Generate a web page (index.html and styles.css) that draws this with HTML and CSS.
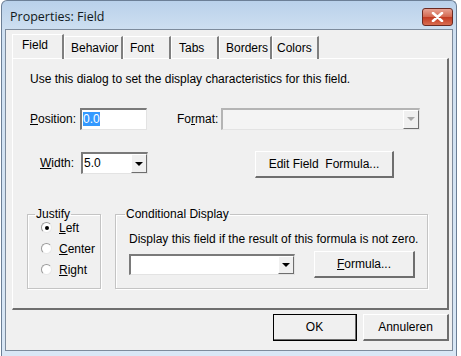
FILE: index.html
```html
<!DOCTYPE html>
<html lang="en">
<head>
  <meta charset="UTF-8">
  <title>Properties: Field</title>
  <link rel="stylesheet" href="styles.css">
</head>
<body>

<div class="window">
  <div class="titlebar">
    <span class="title">Properties: Field</span>
    <span class="close-btn">
      <svg width="13" height="10" viewBox="0 0 13 10">
        <path d="M2 1 L11 9 M11 1 L2 9" stroke="#fff" stroke-width="2.6" stroke-linecap="round"/>
      </svg>
    </span>
  </div>

  <div class="client">
    <!-- Tab strip -->
    <div class="tabs">
      <div class="tab selected">Field</div>
      <div class="tab">Behavior</div>
      <div class="tab">Font</div>
      <div class="tab">Tabs</div>
      <div class="tab">Borders</div>
      <div class="tab">Colors</div>
    </div>

    <div class="panel">
      <p class="intro">Use this dialog to set the display characteristics for this field.</p>

      <div class="row row-one">
        <label class="lbl lbl-position"><u>P</u>osition:</label>
        <div class="edit position-edit"><span class="sel-text">0.0</span></div>
        <label class="lbl lbl-format">Fo<u>r</u>mat:</label>
        <div class="combo format-combo disabled">
          <div class="combo-value"></div>
          <div class="combo-arrow"><span class="tri"></span></div>
        </div>
      </div>

      <div class="row row-two">
        <label class="lbl lbl-width"><u>W</u>idth:</label>
        <div class="combo width-combo">
          <div class="combo-value">5.0</div>
          <div class="combo-arrow"><span class="tri"></span></div>
        </div>
        <button class="btn edit-formula">Edit Field&nbsp; Formula...</button>
      </div>

      <div class="row row-groups">
        <fieldset class="group justify">
          <legend>Justify</legend>
          <div class="radios">
            <div class="radio"><span class="dot checked"></span><u>L</u>eft</div>
            <div class="radio"><span class="dot"></span><u>C</u>enter</div>
            <div class="radio"><span class="dot"></span><u>R</u>ight</div>
          </div>
        </fieldset>

        <fieldset class="group conditional">
          <legend>Conditional Display</legend>
          <div class="cond-text">Display this field if the result of this formula is not zero.</div>
          <div class="cond-row">
            <div class="combo cond-combo">
              <div class="combo-value"></div>
              <div class="combo-arrow"><span class="tri"></span></div>
            </div>
            <button class="btn formula-btn"><u>F</u>ormula...</button>
          </div>
        </fieldset>
      </div>
    </div>

    <div class="footer">
      <button class="btn dlg-btn default">OK</button>
      <button class="btn dlg-btn">Annuleren</button>
    </div>
  </div>
</div>

</body>
</html>
```

FILE: styles.css
```css
/* Dialog basis */
body {
  margin: 0;
  background: #ffffff;
  font-family: "Liberation Sans", Arial, sans-serif;
  font-size: 12px;
  color: #000;
}

.window {
  width: 456px;
  height: 356px;
  margin: 0 0 0 1px;
  background: linear-gradient(#b9d1ea, #cfe0f1 30px, #d9e7f5);
  border: 1px solid #6c7f96;
  border-bottom: none;
  border-radius: 6px 6px 0 0;
  box-sizing: border-box;
  display: flex;
  flex-direction: column;
}

.titlebar {
  height: 28px;
  display: flex;
  align-items: center;
  justify-content: space-between;
  padding: 0 3px 0 8px;
}

.title {
  font-family: "Open Sans", "Noto Sans", sans-serif;
  font-size: 12.5px;
  color: #101820;
  margin-top: 2px;
}

.close-btn {
  width: 31px;
  height: 18px;
  margin-top: 4px;
  border: 1px solid #6b2a22;
  border-radius: 3px;
  background: linear-gradient(#e8a293, #d3674f 50%, #c23a22 51%, #d86d50);
  display: flex;
  align-items: center;
  justify-content: center;
  box-sizing: border-box;
}

.client {
  flex: 1;
  margin: 0 3px 5px 3px;
  background: #f0f0f0;
  border: 1px solid #7d8b9c;
  padding: 6px 3px 0 6px;
}

/* Tabs */
.tabs {
  display: flex;
  height: 22px;
}

.tab {
  padding: 4px 0 0 6px;
  height: 18px;
  border-right: 2px solid #7f7f7f;
  border-left: 1px solid #fff;
  border-top: 1px solid #fff;
  box-sizing: content-box;
}

.tab.selected {
  padding: 3px 0 0 9px;
  height: 21px;
  margin-top: -2px;
}

.tabs .tab:nth-child(1) { width: 40px; }
.tabs .tab:nth-child(2) { width: 50px; }
.tabs .tab:nth-child(3) { width: 39px; padding-left: 6px; }
.tabs .tab:nth-child(4) { width: 38px; padding-left: 7px; }
.tabs .tab:nth-child(5) { width: 44px; padding-left: 6px; }
.tabs .tab:nth-child(6) { width: 40px; padding-left: 4px; }

.panel {
  height: 252px;
  border-left: 1px solid #fff;
  border-top: 1px solid #fff;
  border-right: 2px solid #6e6e6e;
  border-bottom: 2px solid #6e6e6e;
  box-sizing: border-box;
  padding: 0 0 0 17px;
}

.intro {
  margin: 13px 0 0 0;
}

.row {
  display: flex;
  align-items: center;
}

.lbl u, .radio u, .btn u {
  text-decoration: underline;
}

.row-one {
  margin-top: 21px;
  height: 23px;
}

.lbl-position {
  width: 50px;
}

.edit {
  width: 67px;
  height: 22px;
  background: #fff;
  border-top: 2px solid #7a7a7a;
  border-left: 2px solid #7a7a7a;
  border-right: 1px solid #e3e3e3;
  border-bottom: 1px solid #e3e3e3;
  box-sizing: border-box;
  padding: 2px 0 0 1px;
}

.sel-text {
  background: #3399ff;
  color: #fff;
}

.lbl-format {
  margin-left: 30px;
  width: 44px;
}

.combo {
  display: flex;
  height: 22px;
  background: #fff;
  border-top: 2px solid #7a7a7a;
  border-left: 2px solid #7a7a7a;
  border-right: 1px solid #e3e3e3;
  border-bottom: 1px solid #e3e3e3;
  box-sizing: border-box;
}

.combo-value {
  flex: 1;
  padding: 2px 0 0 1px;
}

.combo-arrow {
  width: 16px;
  background: #f0f0f0;
  border-top: 1px solid #fff;
  border-left: 1px solid #fff;
  border-right: 1px solid #6e6e6e;
  border-bottom: 1px solid #6e6e6e;
  box-sizing: border-box;
  display: flex;
  align-items: center;
  justify-content: center;
}

.tri {
  width: 0;
  height: 0;
  border-left: 4px solid transparent;
  border-right: 4px solid transparent;
  border-top: 4px solid #000;
}

.format-combo {
  width: 199px;
  border-top-color: #b4b4b4;
  border-left-color: #b4b4b4;
  background: #f4f4f4;
}

.format-combo .tri {
  border-top-color: #a8a8a8;
}

.row-two {
  margin-top: 18px;
}

.lbl-width {
  margin-left: 10px;
  width: 41px;
}

.width-combo {
  width: 67px;
}

.btn {
  font-family: "Liberation Sans", Arial, sans-serif;
  font-size: 12px;
  color: #000;
  background: #f0f0f0;
  border-top: 1px solid #fff;
  border-left: 1px solid #fff;
  border-right: 2px solid #6e6e6e;
  border-bottom: 2px solid #6e6e6e;
  padding: 0;
}

.edit-formula {
  margin-left: 107px;
  margin-top: 3px;
  width: 139px;
  height: 27px;
}

.row-groups {
  margin-top: 29px;
  align-items: flex-start;
}

.group {
  margin: 0;
  padding: 0;
  border: 1px solid #c4c4c4;
  box-shadow: 1px 1px 0 #fff, inset 1px 1px 0 #fff;
  height: 82px;
  box-sizing: border-box;
}

.group legend {
  padding: 0 1px;
  margin-left: -6px;
}

.justify {
  width: 74px;
  margin-left: -3px;
  padding: 0 0 0 13px;
}

.radios {
  margin-top: -4px;
}

.radio {
  display: flex;
  align-items: center;
  height: 21px;
}

.dot {
  width: 11px;
  height: 11px;
  border-radius: 50%;
  border: 1px solid #9a9a9a;
  border-right-color: #e8e8e8;
  border-bottom-color: #e8e8e8;
  background: #fff;
  box-sizing: border-box;
  margin-right: 7px;
  display: flex;
  align-items: center;
  justify-content: center;
}

.dot.checked::after {
  content: "";
  width: 4px;
  height: 4px;
  border-radius: 50%;
  background: #000;
}

.conditional {
  width: 313px;
  margin-left: 14px;
  padding: 0 0 0 13px;
}

.conditional legend {
  margin-left: -4px;
}

.cond-text {
  margin-top: 11px;
}

.cond-row {
  display: flex;
  align-items: center;
  margin-top: 5px;
}

.cond-combo {
  width: 166px;
  height: 21px;
}

.formula-btn {
  margin-left: 19px;
  width: 101px;
  height: 27px;
}

/* Buttons at bottom */
.footer {
  display: flex;
  justify-content: flex-end;
  gap: 6px;
  padding: 4px 0 0 0;
}

.dlg-btn {
  width: 86px;
  height: 27px;
}

.dlg-btn.default {
  outline: 1px solid #000;
  outline-offset: -1px;
  width: 84px;
}
```
